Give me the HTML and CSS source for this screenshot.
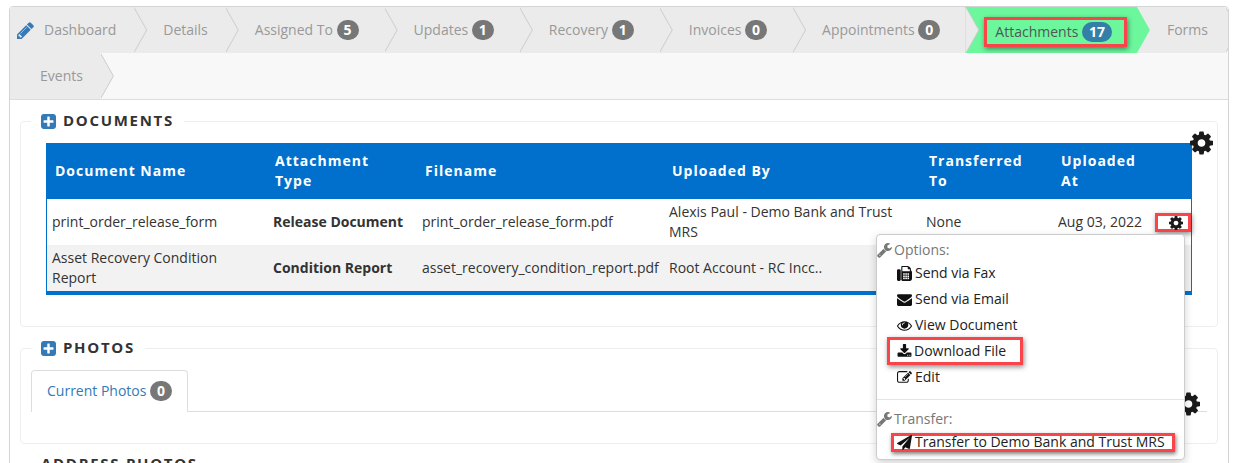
FILE: index.html
```html
<!DOCTYPE html>
<html lang="en">
<head>
  <meta charset="UTF-8">
  <meta name="viewport" content="width=device-width, initial-scale=1.0">
  <title>Attachments</title>
  <link rel="stylesheet" href="styles.css">
</head>
<body>
  <!-- icon sprite -->
  <svg class="sprite" xmlns="http://www.w3.org/2000/svg">
    <symbol id="i-cog" viewBox="128 128 1536 1536"><path d="M1152 896q0-106-75-181t-181-75-181 75-75 181 75 181 181 75 181-75 75-181zm512-109v222q0 12-8 23t-20 13l-185 28q-19 54-39 91 35 50 107 138 10 12 10 25t-9 23q-27 37-99 108t-94 71q-12 0-26-9l-138-108q-44 23-91 38-16 136-29 186-7 27-36 27h-222q-14 0-24.5-8.5t-11.5-21.5l-28-184q-49-16-90-37l-141 107q-10 9-25 9-14 0-25-11-126-114-165-168-7-10-7-23 0-12 8-23 15-21 51-66.5t54-70.5q-27-50-41-99l-183-27q-13-2-21-12.5t-8-23.5v-222q0-12 8-23t19-13l186-28q14-46 39-92-40-57-107-138-10-12-10-24 0-10 9-23 26-36 98.5-107.5t94.5-71.5q13 0 26 10l138 107q44-23 91-38 16-136 29-186 7-27 36-27h222q14 0 24.5 8.5t11.5 21.5l28 184q49 16 90 37l142-107q9-9 24-9 13 0 25 10 129 119 165 170 7 8 7 22 0 12-8 23-15 21-51 66.5t-54 70.5q26 50 41 98l183 28q13 2 21 12.5t8 23.5z"/></symbol>
    <symbol id="i-pencil" viewBox="0 128 1536 1536"><path d="M363 1536l91-91-235-235-91 91v107h128v128h107zm523-928q0-22-22-22-10 0-17 7l-542 542q-7 7-7 17 0 22 22 22 10 0 17-7l542-542q7-7 7-17zm-54-192l416 416-832 832h-416v-416zm683 96q0 53-37 90l-166 166-416-416 166-165q36-38 90-38 53 0 91 38l235 234q37 39 37 91z"/></symbol>
    <symbol id="i-plus" viewBox="128 128 1536 1536"><path d="M1408 960v-128q0-26-19-45t-45-19h-320v-320q0-26-19-45t-45-19h-128q-26 0-45 19t-19 45v320h-320q-26 0-45 19t-19 45v128q0 26 19 45t45 19h320v320q0 26 19 45t45 19h128q26 0 45-19t19-45v-320h320q26 0 45-19t19-45zm256-544v960q0 119-84.5 203.5t-203.5 84.5h-960q-119 0-203.5-84.5t-84.5-203.5v-960q0-119 84.5-203.5t203.5-84.5h960q119 0 203.5 84.5t84.5 203.5z"/></symbol>
    <symbol id="i-wrench" viewBox="64 128 1664 1664"><path d="M448 1472q0-26-19-45t-45-19-45 19-19 45 19 45 45 19 45-19 19-45zm644-420l-682 682q-37 37-90 37-52 0-91-37l-106-108q-38-36-38-90 0-53 38-91l681-681q39 98 114.5 173.5t173.5 114.5zm634-435q0 39-23 106-47 134-164.5 217.5t-258.5 83.5q-185 0-316.5-131.5t-131.5-316.5 131.5-316.5 316.5-131.5q58 0 121.5 16.5t107.5 46.5q16 11 16 28t-16 28l-293 169v224l193 107q5-3 79-48.5t135.5-81 70.5-35.5q15 0 23.5 10t8.5 25z"/></symbol>
    <symbol id="i-fax" viewBox="0 0 1792 1792"><path d="M288 384q66 0 113 47t47 113v1088q0 66-47 113t-113 47h-128q-66 0-113-47t-47-113v-1088q0-66 47-113t113-47h128zm1376 163q58 34 93 93t35 128v768q0 106-75 181t-181 75h-864q-66 0-113-47t-47-113v-1536q0-40 28-68t68-28h672q40 0 88 20t76 48l152 152q28 28 48 76t20 88v163zm-736 989v-128q0-14-9-23t-23-9h-128q-14 0-23 9t-9 23v128q0 14 9 23t23 9h128q14 0 23-9t9-23zm0-256v-128q0-14-9-23t-23-9h-128q-14 0-23 9t-9 23v128q0 14 9 23t23 9h128q14 0 23-9t9-23zm0-256v-128q0-14-9-23t-23-9h-128q-14 0-23 9t-9 23v128q0 14 9 23t23 9h128q14 0 23-9t9-23zm256 512v-128q0-14-9-23t-23-9h-128q-14 0-23 9t-9 23v128q0 14 9 23t23 9h128q14 0 23-9t9-23zm0-256v-128q0-14-9-23t-23-9h-128q-14 0-23 9t-9 23v128q0 14 9 23t23 9h128q14 0 23-9t9-23zm0-256v-128q0-14-9-23t-23-9h-128q-14 0-23 9t-9 23v128q0 14 9 23t23 9h128q14 0 23-9t9-23zm256 512v-128q0-14-9-23t-23-9h-128q-14 0-23 9t-9 23v128q0 14 9 23t23 9h128q14 0 23-9t9-23zm0-256v-128q0-14-9-23t-23-9h-128q-14 0-23 9t-9 23v128q0 14 9 23t23 9h128q14 0 23-9t9-23zm0-256v-128q0-14-9-23t-23-9h-128q-14 0-23 9t-9 23v128q0 14 9 23t23 9h128q14 0 23-9t9-23zm96-384v-256h-160q-40 0-68-28t-28-68v-160h-640v512h896z"/></symbol>
    <symbol id="i-envelope" viewBox="0 0 1792 1792"><path d="M1792 710v794q0 66-47 113t-113 47h-1472q-66 0-113-47t-47-113v-794q44 49 101 87 362 246 497 345 57 42 92.5 65.5t94.5 48 110 24.5h2q51 0 110-24.5t94.5-48 92.5-65.5q170-123 498-345 57-39 100-87zm0-294q0 79-49 151t-122 123q-376 261-468 325-10 7-42.5 30.5t-54 38-52 32.5-57.5 27-50 9h-2q-23 0-50-9t-57.5-27-52-32.5-54-38-42.5-30.5q-91-64-262-182.5t-205-142.5q-62-42-117-115.5t-55-136.5q0-78 41.5-130t118.5-52h1472q65 0 112.5 47t47.5 113z"/></symbol>
    <symbol id="i-eye" viewBox="0 0 1792 1792"><path d="M1664 960q-152-236-381-353 61 104 61 225 0 185-131.5 316.5t-316.5 131.5-316.5-131.5-131.5-316.5q0-121 61-225-229 117-381 353 133 205 333.5 326.5t434.5 121.5 434.5-121.5 333.5-326.5zm-720-384q0-20-14-34t-34-14q-125 0-214.5 89.5t-89.5 214.5q0 20 14 34t34 14 34-14 14-34q0-86 61-147t147-61q20 0 34-14t14-34zm848 384q0 34-20 69-140 230-376.5 368.5t-499.5 138.5-499.5-139-376.5-368q-20-35-20-69t20-69q140-229 376.5-368t499.5-139 499.5 139 376.5 368q20 35 20 69z"/></symbol>
    <symbol id="i-download" viewBox="0 0 1792 1792"><path d="M1344 1344q0-26-19-45t-45-19-45 19-19 45 19 45 45 19 45-19 19-45zm256 0q0-26-19-45t-45-19-45 19-19 45 19 45 45 19 45-19 19-45zm128-224v320q0 40-28 68t-68 28h-1472q-40 0-68-28t-28-68v-320q0-40 28-68t68-28h465l135 136q58 56 136 56t136-56l136-136h464q40 0 68 28t28 68zm-325-569q17 41-14 70l-448 448q-18 19-45 19t-45-19l-448-448q-31-29-14-70 17-39 59-39h256v-448q0-26 19-45t45-19h256q26 0 45 19t19 45v448h256q42 0 59 39z"/></symbol>
    <symbol id="i-edit" viewBox="0 0 1792 1792"><path d="M888 1184l116-116-152-152-116 116v56h96v96h56zm440-720q-16-16-33 1l-350 350q-17 17-1 33t33-1l350-350q17-17 1-33zm80 594v190q0 119-84.5 203.5t-203.5 84.5h-832q-119 0-203.5-84.5t-84.5-203.5v-832q0-119 84.5-203.5t203.5-84.5h832q63 0 117 25 15 7 18 23 3 17-9 29l-49 49q-14 14-32 8-23-6-45-6h-832q-66 0-113 47t-47 113v832q0 66 47 113t113 47h832q66 0 113-47t47-113v-126q0-13 9-22l64-64q15-15 35-7t20 29zm-96-738l288 288-672 672h-288v-288zm444 132l-92 92-288-288 92-92q27-27 68-27t68 27l152 152q27 27 27 68t-27 68z"/></symbol>
    <symbol id="i-send" viewBox="0 0 1792 1792"><path d="M1764 11q33 24 27 64l-256 1536q-5 29-32 45-14 8-31 8-11 0-24-5l-453-185-242 295q-18 23-49 23-13 0-22-4-19-7-30.5-23.5t-11.5-36.5v-349l864-1059-1069 925-395-162q-37-14-40-55-2-40 32-59l1664-960q15-9 32-9 20 0 36 11z"/></symbol>
  </svg>

  <div class="panel">
    <nav class="steps">
      <a class="step"><svg class="step-icon"><use href="#i-pencil"/></svg>Dashboard</a>
      <a class="step">Details</a>
      <a class="step">Assigned To <span class="badge">5</span></a>
      <a class="step">Updates <span class="badge">1</span></a>
      <a class="step">Recovery <span class="badge">1</span></a>
      <a class="step">Invoices <span class="badge">0</span></a>
      <a class="step">Appointments <span class="badge">0</span></a>
      <a class="step active"><span class="callout callout-tab">Attachments <span class="badge">17</span></span></a>
      <a class="step">Forms</a>
      <a class="step">Events</a>
    </nav>

    <div class="content">
      <fieldset class="box">
        <legend><svg class="plus"><use href="#i-plus"/></svg>DOCUMENTS</legend>
        <svg class="big-gear docs-gear"><use href="#i-cog"/></svg>
        <table class="docs">
          <colgroup>
            <col class="c-name"><col class="c-type"><col class="c-file"><col class="c-user"><col class="c-to"><col class="c-at"><col class="c-gear">
          </colgroup>
          <thead>
            <tr>
              <th>Document Name</th>
              <th>Attachment Type</th>
              <th>Filename</th>
              <th>Uploaded By</th>
              <th>Transferred To</th>
              <th>Uploaded At</th>
              <th></th>
            </tr>
          </thead>
          <tbody>
            <tr>
              <td>print_order_release_form</td>
              <td><b>Release Document</b></td>
              <td>print_order_release_form.pdf</td>
              <td>Alexis Paul - Demo Bank and Trust MRS</td>
              <td>None</td>
              <td>Aug 03, 2022</td>
              <td class="gear-cell">
                <span class="callout callout-gear"><svg class="row-gear"><use href="#i-cog"/></svg></span>
                <div class="menu">
                  <div class="menu-head"><svg class="ico ico-grey"><use href="#i-wrench"/></svg>Options:</div>
                  <div class="menu-item"><svg class="ico"><use href="#i-fax"/></svg>Send via Fax</div>
                  <div class="menu-item"><svg class="ico"><use href="#i-envelope"/></svg>Send via Email</div>
                  <div class="menu-item"><svg class="ico"><use href="#i-eye"/></svg>View Document</div>
                  <div class="menu-item"><span class="callout callout-download"><svg class="ico"><use href="#i-download"/></svg>Download File</span></div>
                  <div class="menu-item"><svg class="ico"><use href="#i-edit"/></svg>Edit</div>
                  <div class="menu-divider"></div>
                  <div class="menu-head"><svg class="ico ico-grey"><use href="#i-wrench"/></svg>Transfer:</div>
                  <div class="menu-item"><span class="callout callout-transfer"><svg class="ico"><use href="#i-send"/></svg>Transfer to Demo Bank and Trust MRS</span></div>
                </div>
              </td>
            </tr>
            <tr class="alt">
              <td>Asset Recovery Condition Report</td>
              <td><b>Condition Report</b></td>
              <td>asset_recovery_condition_report.pdf</td>
              <td>Root Account - RC Incc..</td>
              <td></td>
              <td></td>
              <td></td>
            </tr>
          </tbody>
        </table>
      </fieldset>

      <fieldset class="box box-photos">
        <legend><svg class="plus"><use href="#i-plus"/></svg>PHOTOS</legend>
        <svg class="big-gear photos-gear"><use href="#i-cog"/></svg>
        <div class="tabs">
          <a class="tab">Current Photos <span class="badge">0</span></a>
        </div>
      </fieldset>

      <fieldset class="box box-address">
        <legend>ADDRESS PHOTOS</legend>
      </fieldset>
    </div>
  </div>
</body>
</html>
```

FILE: styles.css
```css
html, body {
  margin: 0;
  height: 100%;
  overflow: hidden;
  background: #fff;
}
body {
  font-family: "Open Sans", sans-serif;
  font-size: 14px;
  line-height: 20px;
  color: #333;
}
.sprite {
  position: absolute;
  width: 0;
  height: 0;
}
svg {
  fill: currentColor;
}

.panel {
  margin: 6px 5px 0 9px;
  border: 1px solid #d4d4d4;
  border-radius: 4px;
  overflow: hidden;
}

/* step nav */
.steps {
  display: flex;
  flex-wrap: wrap;
  background: #f8f8f8;
  border-bottom: 1px solid #ddd;
  overflow: hidden;
  isolation: isolate;
}
.step {
  position: relative;
  display: flex;
  align-items: center;
  height: 46px;
  padding: 0 17px 0 30px;
  background: #ebebeb;
  color: #999;
  white-space: pre;
}
.step:first-child {
  padding-left: 7px;
}
.step::before,
.step::after {
  content: "";
  position: absolute;
  top: 0;
  width: 13px;
  height: 46px;
  clip-path: polygon(0 0, 100% 50%, 0 100%);
  z-index: 1;
}
.step::before {
  left: calc(100% + 1px);
  background: #ccc;
}
.step::after {
  left: 100%;
  background: #ebebeb;
}
.step.active {
  background: #6cf79d;
  color: #555;
}
.step.active::before {
  display: none;
}
.step.active::after {
  background: #6cf79d;
}
.step-icon {
  width: 17px;
  height: 17px;
  margin-right: 10px;
  color: #337ab7;
}
.badge {
  display: inline-block;
  min-width: 8px;
  padding: 3px 7px;
  border-radius: 10px;
  background: #777;
  color: #fff;
  font-size: 14px;
  font-weight: 700;
  line-height: 14px;
  text-align: center;
}
.step > .badge {
  margin-right: 8px;
}
.step.active .badge {
  background: #337fa8;
}

/* red annotation boxes */
.callout {
  display: inline-flex;
  align-items: center;
  box-sizing: border-box;
  border: 3px solid #f9454a;
  box-shadow: 1px 2px 5px rgba(0, 0, 0, .45);
  white-space: pre;
}
.callout-tab {
  height: 30px;
  margin: 4px -7px 0 -11px;
  padding: 0 12px 0 8px;
}
.callout-gear {
  width: 36px;
  height: 19px;
  padding-left: 11px;
  vertical-align: middle;
}
.callout-download {
  height: 28px;
  margin-left: -10px;
  padding: 0 14px 0 7px;
}
.callout-download .ico {
  margin-right: 2px;
}
.callout-transfer {
  height: 19px;
  margin-left: -6px;
  padding: 0 7px 0 3px;
  box-shadow: 1px 2px 4px rgba(0, 0, 0, .5);
}
.callout-transfer .ico {
  margin-right: 3px;
}

/* sections */
.content {
  padding: 11px 10px 0;
}
.box {
  position: relative;
  min-width: 0;
  margin: 0 0 11px;
  padding: 12px 25px 31px;
  border: 1px solid #eee;
  border-radius: 4px;
}
.box legend {
  display: flex;
  align-items: center;
  margin-left: -15px;
  padding: 0 10px 2px;
  color: #333;
  font-size: 15px;
  font-weight: 700;
  letter-spacing: 1.7px;
  line-height: 18px;
}
.plus {
  width: 15px;
  height: 15px;
  margin: 2px 7px 0 0;
  color: #337ab7;
}
.big-gear {
  position: absolute;
  width: 23px;
  height: 24px;
  color: #1a1a1a;
}
.docs-gear {
  top: 0;
  right: 4px;
}
.photos-gear {
  top: 34px;
  right: 17px;
}

/* documents table */
.docs {
  width: 100%;
  table-layout: fixed;
  border-collapse: separate;
  border-spacing: 0;
  border: 1px solid #0070cc;
  border-top: 0;
  border-bottom: 4px solid #0070cc;
}
.c-name { width: 220px; }
.c-type { width: 150px; }
.c-file { width: 247px; }
.c-user { width: 257px; }
.c-to { width: 132px; }
.c-at { width: 97px; }
.docs th {
  padding: 8px;
  background: #0070cc;
  color: #fff;
  font-weight: 700;
  letter-spacing: 1px;
  text-align: left;
}
.docs td {
  height: 40px;
  padding: 3px 5px;
  vertical-align: middle;
}
.docs td:nth-child(2) {
  padding-left: 6px;
}
.docs .alt td {
  background: #f2f2f2;
}
.gear-cell {
  position: relative;
}
.row-gear {
  width: 14px;
  height: 14px;
  color: #1a1a1a;
}

/* dropdown */
.menu {
  position: absolute;
  top: 35px;
  right: 6px;
  box-sizing: border-box;
  width: 309px;
  height: 226px;
  padding: 5px 0;
  background: #fff;
  border: 1px solid #ccc;
  border-radius: 4px;
  box-shadow: 0 3px 8px rgba(0, 0, 0, .18);
  z-index: 5;
}
.menu-head {
  display: flex;
  align-items: center;
  color: #777;
}
.menu-head .ico {
  margin-right: 2px;
}
.menu-item {
  display: flex;
  align-items: center;
  height: 26px;
  padding-left: 20px;
  color: #222;
}
.menu-divider {
  height: 1px;
  margin: 9px 0;
  background: #e5e5e5;
}
.ico {
  flex: none;
  width: 15px;
  height: 15px;
  margin-right: 3px;
  color: #111;
}
.ico-grey {
  color: #777;
}

/* photo tabs */
.box-photos {
  padding: 12px 10px 31px;
}
.box-photos legend {
  margin-left: 0;
}
.tabs {
  display: flex;
  border-bottom: 1px solid #ddd;
}
.tab {
  margin-bottom: -1px;
  padding: 10px 15px 11px;
  background: #fff;
  border: 1px solid #ddd;
  border-bottom: 0;
  border-radius: 4px 4px 0 0;
  color: #337ab7;
  white-space: pre;
}
.box-address {
  margin-top: -1px;
  padding: 12px 10px 30px;
}
.box-address legend {
  margin-left: 0;
}
```
